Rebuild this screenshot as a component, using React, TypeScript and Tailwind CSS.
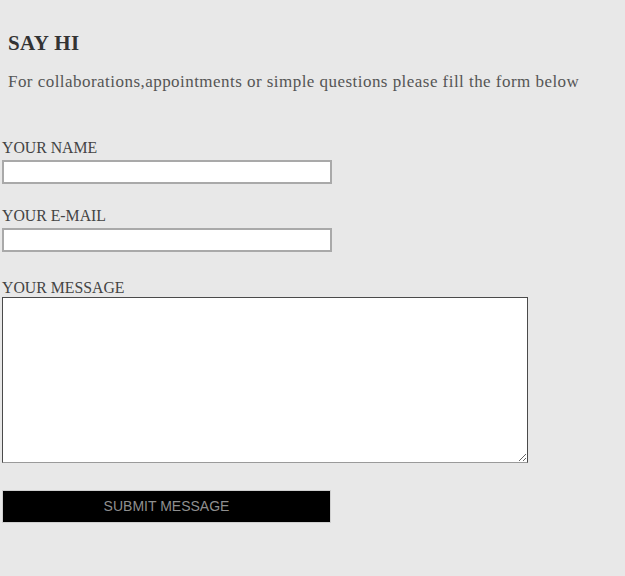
export default function App() {
  return (
    <div className="min-h-[576px] w-full bg-[#e8e8e8] font-['Liberation_Serif',serif]">
      <div className="px-2 pt-[30px]">
        <h2 className="text-[21px] font-bold leading-[26px] tracking-[0.4px] text-[#333]">SAY HI</h2>
        <p className="mt-[15px] text-[17px] leading-[22px] tracking-[0.46px] text-[#555]">
          For collaborations,appointments or simple questions please fill the form below
        </p>
      </div>
      <form className="mt-[46px] flex flex-col pl-[2px]">
        <label className="text-[15.8px] leading-[18px] text-[#444]">YOUR NAME</label>
        <input className="mt-[3px] h-[24px] w-[330px] border-2 border-[#a9a9a9] bg-white outline-none" />
        <label className="mt-[23px] text-[15.8px] leading-[18px] text-[#444]">YOUR E-MAIL</label>
        <input className="mt-[3px] h-[24px] w-[330px] border-2 border-[#a9a9a9] bg-white outline-none" />
        <label className="mt-[27px] text-[15.8px] leading-[18px] text-[#444]">YOUR MESSAGE</label>
        <textarea className="mt-[0px] h-[166px] w-[526px] border border-[#4a4a4a] border-b-[#9a9a9a] bg-white outline-none" />
        <button
          type="button"
          className="mt-[27px] h-[33px] w-[329px] border border-[#cfcfcf] bg-black font-['Liberation_Sans',sans-serif] text-[14px] text-[#8f8f8f]"
        >
          SUBMIT MESSAGE
        </button>
      </form>
    </div>
  );
}
